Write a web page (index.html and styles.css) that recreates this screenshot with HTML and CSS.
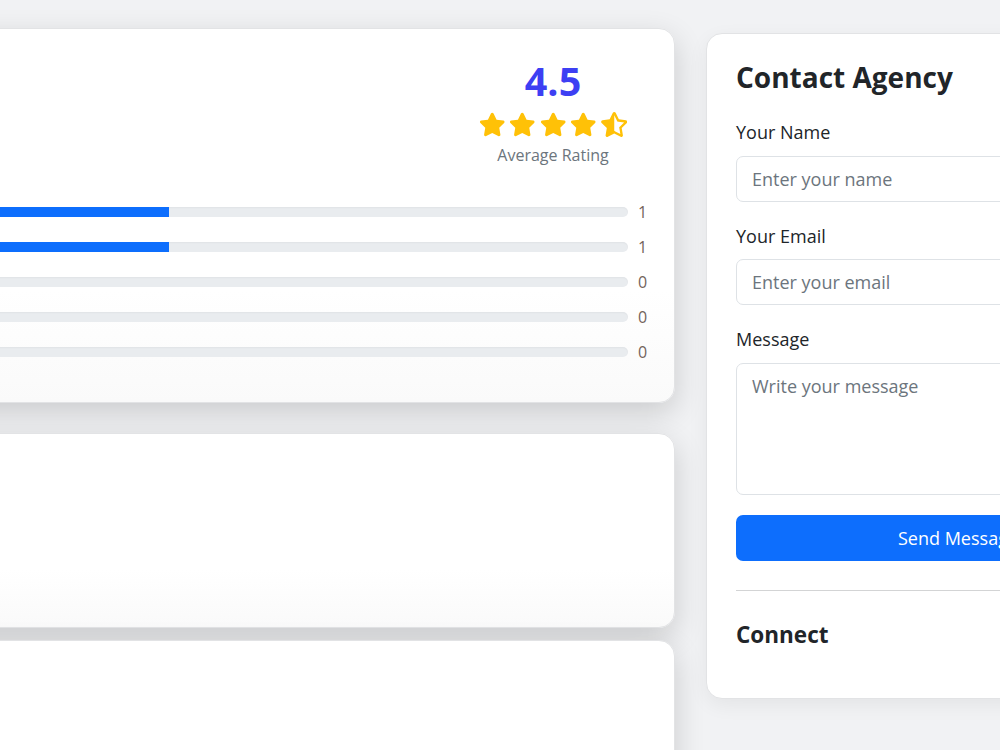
FILE: index.html
```html
<!DOCTYPE html>
<html lang="en">

<head>
    <meta charset="UTF-8">
    <meta name="viewport" content="width=device-width, initial-scale=1.0">
    <title>Agency Profile</title>
    <link rel="stylesheet" href="styles.css">
</head>

<body>
    <div class="layout">
        <!-- left column: reviews and details -->
        <main class="main-col">
            <section class="card rating-card">
                <div class="rating-top">
                    <div class="rating-summary">
                        <div class="rating-value">4.5</div>
                        <div class="stars">
                            <svg class="star" viewBox="0 0 576 512"><path d="M259.3 17.8L194 150.2 47.9 171.5c-26.2 3.8-36.7 36.1-17.7 54.6l105.7 103-25 145.5c-4.5 26.3 23.2 46 46.4 33.7L288 439.6l130.7 68.7c23.2 12.2 50.9-7.4 46.4-33.7l-25-145.5 105.7-103c19-18.5 8.5-50.8-17.7-54.6L382 150.2 316.7 17.8c-11.7-23.6-45.6-23.9-57.4 0z"/></svg>
                            <svg class="star" viewBox="0 0 576 512"><path d="M259.3 17.8L194 150.2 47.9 171.5c-26.2 3.8-36.7 36.1-17.7 54.6l105.7 103-25 145.5c-4.5 26.3 23.2 46 46.4 33.7L288 439.6l130.7 68.7c23.2 12.2 50.9-7.4 46.4-33.7l-25-145.5 105.7-103c19-18.5 8.5-50.8-17.7-54.6L382 150.2 316.7 17.8c-11.7-23.6-45.6-23.9-57.4 0z"/></svg>
                            <svg class="star" viewBox="0 0 576 512"><path d="M259.3 17.8L194 150.2 47.9 171.5c-26.2 3.8-36.7 36.1-17.7 54.6l105.7 103-25 145.5c-4.5 26.3 23.2 46 46.4 33.7L288 439.6l130.7 68.7c23.2 12.2 50.9-7.4 46.4-33.7l-25-145.5 105.7-103c19-18.5 8.5-50.8-17.7-54.6L382 150.2 316.7 17.8c-11.7-23.6-45.6-23.9-57.4 0z"/></svg>
                            <svg class="star" viewBox="0 0 576 512"><path d="M259.3 17.8L194 150.2 47.9 171.5c-26.2 3.8-36.7 36.1-17.7 54.6l105.7 103-25 145.5c-4.5 26.3 23.2 46 46.4 33.7L288 439.6l130.7 68.7c23.2 12.2 50.9-7.4 46.4-33.7l-25-145.5 105.7-103c19-18.5 8.5-50.8-17.7-54.6L382 150.2 316.7 17.8c-11.7-23.6-45.6-23.9-57.4 0z"/></svg>
                            <svg class="star" viewBox="0 0 536 512"><path d="M508.55 171.51L362.18 150.2 296.77 17.81C290.89 5.98 279.42 0 267.95 0c-11.4 0-22.790 5.9-28.69 17.81l-65.43 132.38-146.38 21.29c-26.25 3.8-36.77 36.09-17.74 54.59l105.89 103-25.06 145.48C86.98 495.33 103.57 512 122.15 512c4.93 0 10-1.17 14.87-3.75l130.95-68.68 130.94 68.7c4.86 2.55 9.92 3.71 14.83 3.71 18.6 0 35.22-16.61 31.66-37.4l-25.03-145.49 105.91-102.98c19.04-18.5 8.52-50.8-17.73-54.6zm-121.74 123.2l-18.12 17.62 4.28 24.88 19.52 113.45-102.13-53.59-22.38-11.74.03-317.19 51.03 103.29 11.18 22.63 25.01 3.64 114.23 16.63-82.65 80.38z"/></svg>
                        </div>
                        <div class="rating-label">Average Rating</div>
                    </div>
                </div>

                <div class="bars">
                    <div class="bar-row">
                        <div class="bar"><div class="bar-fill" style="width: 50%"></div></div>
                        <span class="bar-count">1</span>
                    </div>
                    <div class="bar-row">
                        <div class="bar"><div class="bar-fill" style="width: 50%"></div></div>
                        <span class="bar-count">1</span>
                    </div>
                    <div class="bar-row">
                        <div class="bar"><div class="bar-fill" style="width: 0%"></div></div>
                        <span class="bar-count">0</span>
                    </div>
                    <div class="bar-row">
                        <div class="bar"><div class="bar-fill" style="width: 0%"></div></div>
                        <span class="bar-count">0</span>
                    </div>
                    <div class="bar-row">
                        <div class="bar"><div class="bar-fill" style="width: 0%"></div></div>
                        <span class="bar-count">0</span>
                    </div>
                </div>
            </section>

            <section class="card info-card"></section>
            <section class="card list-card"></section>
        </main>

        <!-- right column: contact form -->
        <aside class="card contact-card">
            <h3 class="contact-title">Contact Agency</h3>
            <form class="contact-form">
                <label class="form-label" for="name">Your Name</label>
                <input class="form-control" id="name" type="text" placeholder="Enter your name">

                <label class="form-label" for="email">Your Email</label>
                <input class="form-control" id="email" type="email" placeholder="Enter your email">

                <label class="form-label" for="message">Message</label>
                <textarea class="form-control form-textarea" id="message" placeholder="Write your message"></textarea>

                <button class="btn-send" type="button">Send Message</button>
            </form>
            <hr class="divider">
            <h5 class="connect-title">Connect</h5>
        </aside>
    </div>
</body>

</html>
```

FILE: styles.css
```css
body {
    margin: 0;
    font-family: "Open Sans", "Noto Sans", sans-serif;
    background-color: #f1f2f4;
    color: #212529;
    overflow: hidden;
}

.layout {
    display: flex;
    align-items: flex-start;
    gap: 31px;
    margin-left: -340px;
    padding-top: 28px;
}

.main-col {
    width: 1015px;
    flex-shrink: 0;
}

.card {
    background: linear-gradient(#ffffff 70%, #fafafa);
    border: 1px solid #e2e3e5;
    border-radius: 16px;
    box-shadow: 0 10px 30px rgba(0, 0, 0, 0.16);
    box-sizing: border-box;
}

/* rating card */
.rating-card {
    padding: 29px 28px 33px 28px;
}

.rating-top {
    display: flex;
    justify-content: flex-end;
}

.rating-summary {
    width: 186px;
    text-align: center;
}

.rating-value {
    font-size: 39.5px;
    line-height: 46px;
    font-weight: 700;
    color: #3d3ff3;
}

.stars {
    display: flex;
    justify-content: center;
    gap: 4px;
    margin-top: 8px;
    height: 25px;
}

.star {
    width: 26.5px;
    height: 25px;
    fill: #ffc107;
}

.rating-label {
    margin-top: 6px;
    font-size: 16px;
    line-height: 24px;
    color: #6c757d;
}

.bars {
    margin-top: 27px;
    padding-left: 21px;
}

.bar-row {
    display: flex;
    align-items: center;
    gap: 10px;
    height: 35px;
}

.bar {
    flex: 1;
    height: 10px;
    border-radius: 5px;
    background-color: #e9ecef;
    box-shadow: inset 0 1px 2px rgba(0, 0, 0, 0.04);
    overflow: hidden;
}

.bar-fill {
    height: 100%;
    background-color: #0d6efd;
}

.bar-count {
    width: 8px;
    font-size: 16px;
    color: #73645c;
}

.info-card {
    margin-top: 30px;
    height: 195px;
}

.list-card {
    margin-top: 12px;
    height: 300px;
}

/* contact card */
.contact-card {
    width: 504px;
    flex-shrink: 0;
    margin-top: 5px;
    padding: 23px 29px 30px 29px;
    box-shadow: 0 6px 20px rgba(0, 0, 0, 0.06);
    background: #ffffff;
}

.contact-title {
    margin: 0 0 21px 0;
    font-size: 28px;
    line-height: 40px;
    font-weight: 700;
}

.contact-form {
    display: flex;
    flex-direction: column;
}

.form-label {
    font-size: 18px;
    line-height: 29px;
    margin-bottom: 8.5px;
}

.form-control {
    height: 46px;
    padding: 0 15px;
    margin-bottom: 20px;
    border: 1px solid #dee2e6;
    border-radius: 7px;
    font-family: inherit;
    font-size: 18px;
    color: #212529;
    box-sizing: border-box;
}

.form-control::placeholder {
    color: #6c757d;
}

.form-textarea {
    height: 132.5px;
    padding: 8px 15px;
    line-height: 29px;
    resize: none;
}

.btn-send {
    height: 46px;
    border: none;
    border-radius: 7px;
    background-color: #0d6efd;
    color: #ffffff;
    font-family: inherit;
    font-size: 18px;
    cursor: pointer;
}

.divider {
    margin: 29px 0;
    border: 0;
    border-top: 1px solid #d3d4d5;
}

.connect-title {
    margin: 0 0 19px 0;
    font-size: 22.5px;
    line-height: 29px;
    font-weight: 700;
}
```
